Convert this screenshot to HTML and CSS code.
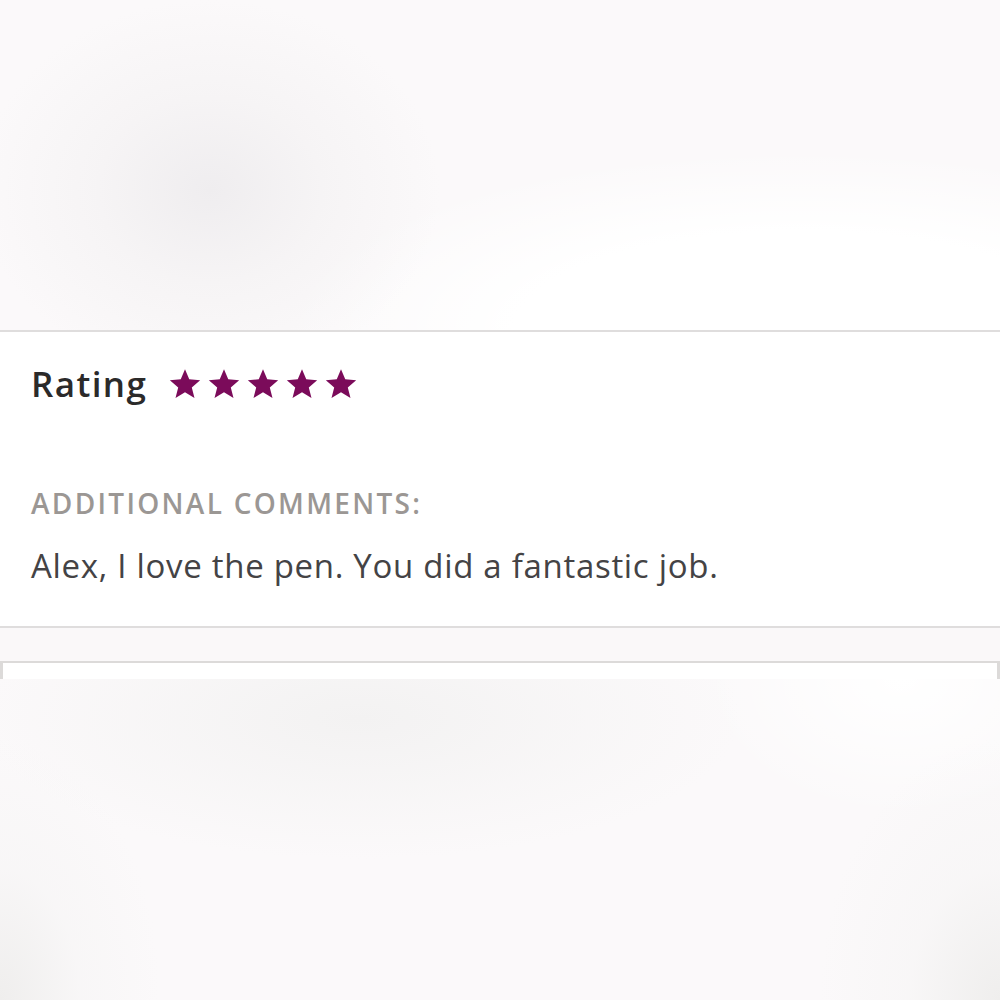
FILE: index.html
```html
<!DOCTYPE html>
<html lang="en">
<head>
    <meta charset="UTF-8">
    <meta name="viewport" content="width=device-width, initial-scale=1.0">
    <title>Review</title>
    <link rel="stylesheet" href="styles.css">
</head>
<body>
    <div class="photo-area photo-top"></div>

    <div class="review">
        <div class="rating-row">
            <h2 class="rating-label">Rating</h2>
            <div class="stars">
                <svg class="star" viewBox="0 0 24 24"><path d="M12 1.6l3 7.1 7.7.6-5.9 5.1 1.9 7.5L12 17.9l-6.7 4 1.9-7.5-5.9-5.1 7.7-.6z"/></svg>
                <svg class="star" viewBox="0 0 24 24"><path d="M12 1.6l3 7.1 7.7.6-5.9 5.1 1.9 7.5L12 17.9l-6.7 4 1.9-7.5-5.9-5.1 7.7-.6z"/></svg>
                <svg class="star" viewBox="0 0 24 24"><path d="M12 1.6l3 7.1 7.7.6-5.9 5.1 1.9 7.5L12 17.9l-6.7 4 1.9-7.5-5.9-5.1 7.7-.6z"/></svg>
                <svg class="star" viewBox="0 0 24 24"><path d="M12 1.6l3 7.1 7.7.6-5.9 5.1 1.9 7.5L12 17.9l-6.7 4 1.9-7.5-5.9-5.1 7.7-.6z"/></svg>
                <svg class="star" viewBox="0 0 24 24"><path d="M12 1.6l3 7.1 7.7.6-5.9 5.1 1.9 7.5L12 17.9l-6.7 4 1.9-7.5-5.9-5.1 7.7-.6z"/></svg>
            </div>
        </div>

        <h3 class="comments-label">ADDITIONAL COMMENTS:</h3>
        <p class="comments-text">Alex, I love the pen. You did a fantastic job.</p>
    </div>

    <div class="spacer"></div>
    <div class="next-card"></div>

    <div class="photo-area photo-bottom"></div>
</body>
</html>
```

FILE: styles.css
```css
/* page */
body {
    margin: 0;
    padding: 0;
    font-family: "Open Sans", Lato, sans-serif;
    background-color: #faf8f9;
}

/* blurred product photos above and below the review */
.photo-area {
    background-color: #fbf9fa;
}

.photo-top {
    height: 330px;
    background-image:
        radial-gradient(ellipse 230px 190px at 210px 190px, #efedef 0%, rgba(243, 241, 242, 0.6) 50%, rgba(250, 248, 249, 0) 100%),
        radial-gradient(ellipse 520px 180px at 800px 330px, #ffffff 0%, #ffffff 55%, rgba(255, 255, 255, 0) 100%);
}

.photo-bottom {
    height: 340px;
    background-image:
        radial-gradient(ellipse 380px 140px at 360px 40px, #f3f2f2 0%, rgba(245, 244, 244, 0.5) 60%, rgba(250, 248, 249, 0) 100%),
        radial-gradient(ellipse 180px 260px at 1000px 320px, #efeeed 0%, rgba(245, 244, 244, 0.5) 50%, rgba(250, 248, 249, 0) 100%),
        radial-gradient(ellipse 160px 260px at 0px 320px, #efeeed 0%, rgba(245, 244, 244, 0.5) 50%, rgba(250, 248, 249, 0) 100%),
        radial-gradient(ellipse 200px 140px at 900px 0px, #ffffff 0%, rgba(255, 255, 255, 0) 100%);
}

/* review card */
.review {
    background-color: #fff;
    border-top: 2px solid #dfdddd;
    border-bottom: 2px solid #dfdddd;
    padding: 30px 31px 40px;
}

.rating-row {
    display: flex;
    align-items: center;
    gap: 21px;
}

.rating-label {
    margin: 0;
    font-size: 35px;
    line-height: 44px;
    font-weight: 600;
    color: #2b2a2a;
    letter-spacing: 1.4px;
}

.stars {
    display: flex;
    gap: 5px;
    margin-top: 0;
}

.star {
    width: 34px;
    height: 34px;
    fill: #7b0b5a;
}

.comments-label {
    margin: 81px 0 0;
    font-size: 28px;
    line-height: 32px;
    font-weight: 600;
    color: #9b9794;
    letter-spacing: 2.3px;
}

.comments-text {
    margin: 27px 0 0;
    font-size: 33px;
    line-height: 40px;
    color: #444345;
    letter-spacing: 0.7px;
}

.spacer {
    height: 33px;
    background-color: #faf8f9;
}

.next-card {
    height: 16px;
    background-color: #fff;
    border-top: 2px solid #dcdad9;
    border-left: 3px solid #dcdad9;
    border-right: 3px solid #dcdad9;
}
```
